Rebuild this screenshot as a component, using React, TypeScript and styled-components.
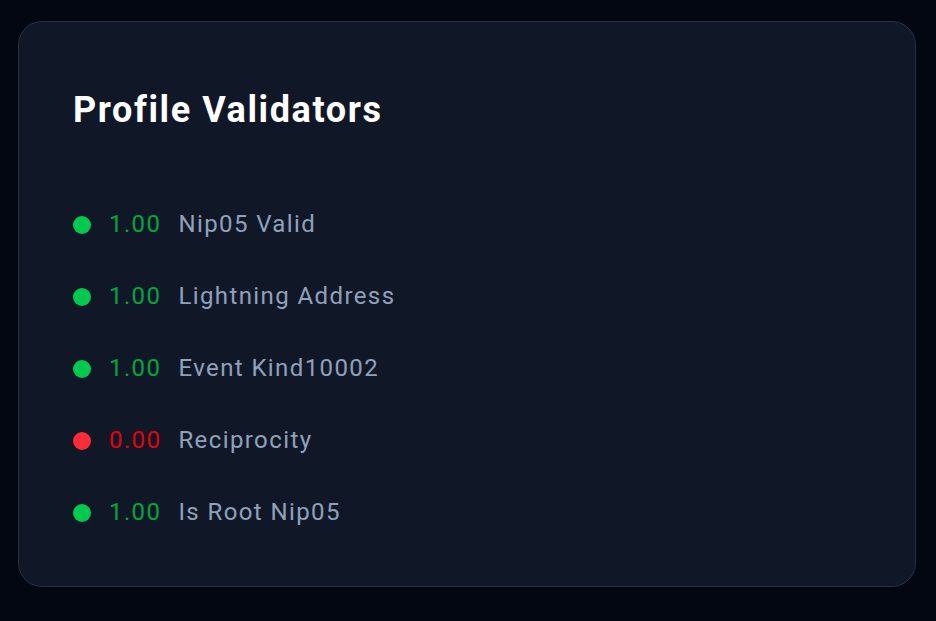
import * as React from 'react';
import styled, { createGlobalStyle } from 'styled-components';

const GlobalStyle = createGlobalStyle`
    html, body {
        margin: 0;
        padding: 0;
        background: #030712;
        font-family: Roboto, "Liberation Sans", sans-serif;
    }
`;

const Page = styled.div`
    box-sizing: border-box;
    width: 936px;
    height: 621px;
    padding: 21px 20px 34px 18px;
    background: #030712;
`;

const Card = styled.section`
    box-sizing: border-box;
    height: 100%;
    padding: 61px 54px 54px 54px;
    background: #101828;
    border: 1px solid #283142;
    border-radius: 24px;
    display: flex;
    flex-direction: column;
    gap: 69px;
`;

const Title = styled.h2`
    margin: 0;
    color: #ffffff;
    font-size: 36px;
    line-height: 54px;
    font-weight: 700;
    letter-spacing: 1.6px;
`;

const List = styled.ul`
    margin: 0;
    padding: 0;
    list-style: none;
    display: flex;
    flex-direction: column;
    gap: 36px;
`;

const Row = styled.li`
    display: flex;
    align-items: center;
    gap: 17px;
    height: 36px;
    font-size: 24px;
    line-height: 36px;
    letter-spacing: 1.4px;
`;

const Dot = styled.span<{ $ok: boolean }>`
    width: 18px;
    height: 18px;
    border-radius: 50%;
    flex-shrink: 0;
    margin-top: 2px;
    margin-right: 1px;
    background: ${p => (p.$ok ? '#00c950' : '#fb2c36')};
`;

const Score = styled.span<{ $ok: boolean }>`
    color: ${p => (p.$ok ? '#00a63e' : '#e7000b')};
`;

const Label = styled.span`
    color: #90a1b9;
`;

const validators = [
    { name: 'Nip05 Valid', score: 1 },
    { name: 'Lightning Address', score: 1 },
    { name: 'Event Kind10002', score: 1 },
    { name: 'Reciprocity', score: 0 },
    { name: 'Is Root Nip05', score: 1 },
];

const App = () => (
    <>
        <GlobalStyle />
        <Page>
            <Card>
                <Title>Profile Validators</Title>
                <List>
                    {validators.map(v => (
                        <Row key={v.name}>
                            <Dot $ok={v.score > 0} />
                            <Score $ok={v.score > 0}>{v.score.toFixed(2)}</Score>
                            <Label>{v.name}</Label>
                        </Row>
                    ))}
                </List>
            </Card>
        </Page>
    </>
);

export default App;
